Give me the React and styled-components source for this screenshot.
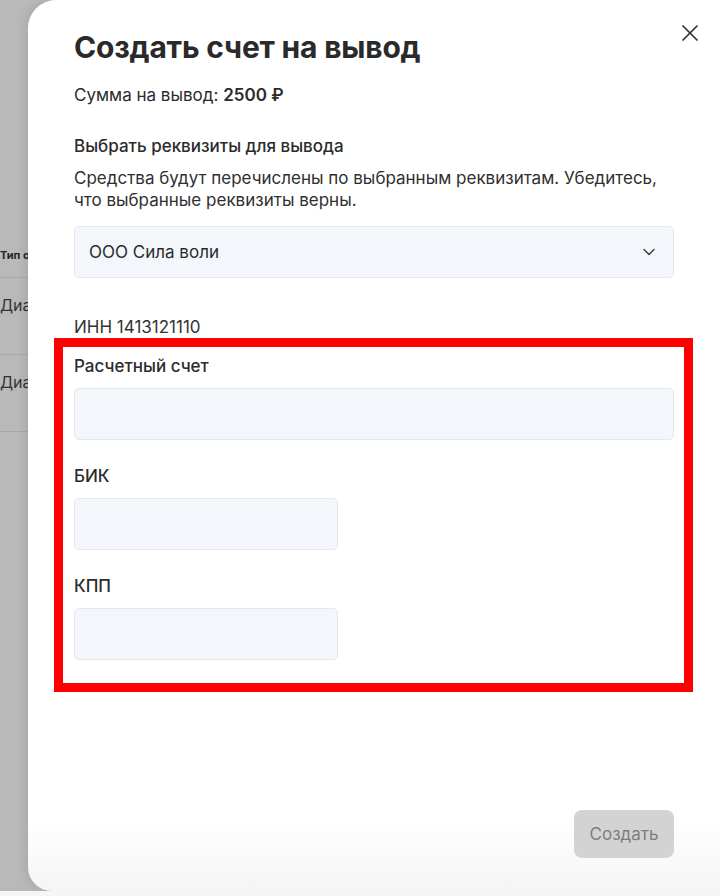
import React from "react";
import styled, { createGlobalStyle } from "styled-components";
import { X, ChevronDown } from "lucide-react";

const GlobalStyle = createGlobalStyle`
  html, body {
    margin: 0;
    padding: 0;
    background: #f6f6f6;
    overflow: hidden;
  }
  body {
    font-family: Inter, "Noto Sans", "Liberation Sans", sans-serif;
    color: #2b2b2b;
  }
  * { box-sizing: border-box; }
`;

const Page = styled.div`
  display: flex;
  height: 891px;
  background: #b9b9b9;
`;

const Backdrop = styled.div`
  width: 28px;
  flex-shrink: 0;
  overflow: hidden;
  padding-top: 233px;
  white-space: nowrap;
`;

const BackdropHead = styled.div`
  height: 45px;
  display: flex;
  align-items: center;
  font-size: 11px;
  font-weight: 700;
  color: #262626;
  border-bottom: 1px solid #a9a9a9;
`;

const BackdropRow = styled.div`
  height: 77px;
  padding-top: 16px;
  font-size: 16px;
  line-height: 22px;
  color: #333;
  border-bottom: 1px solid #a9a9a9;
`;

const Modal = styled.div`
  position: relative;
  flex: 1;
  display: flex;
  flex-direction: column;
  padding: 29px 46px 33px;
  background: linear-gradient(to bottom, #ffffff 92%, #f4f5f5 100%);
  border-radius: 28px 0 0 24px;
  box-shadow: -4px 0 10px rgba(0, 0, 0, 0.08);
`;

const CloseButton = styled.button`
  position: absolute;
  top: 19px;
  right: 16px;
  padding: 0;
  border: none;
  background: none;
  color: #333;
  display: flex;
  cursor: pointer;
`;

const Title = styled.h1`
  margin: 0;
  font-size: 30px;
  line-height: 36px;
  font-weight: 700;
  color: #2a2a2a;
  letter-spacing: -0.2px;
`;

const Amount = styled.div`
  margin-top: 18px;
  font-size: 17px;
  line-height: 24px;
  b { font-weight: 600; }
`;

const Label = styled.div`
  margin-top: ${(p) => p.$mt || 0}px;
  font-size: 17px;
  line-height: 22px;
  font-weight: 500;
  color: #2b2b2b;
`;

const Hint = styled.p`
  margin: 10px 0 0;
  font-size: 17px;
  line-height: 22px;
  color: #2f2f2f;
`;

const Select = styled.div`
  margin-top: 15px;
  height: 52px;
  padding: 0 14px;
  display: flex;
  align-items: center;
  justify-content: space-between;
  background: #f3f7fb;
  border: 1px solid #e4e8ed;
  border-radius: 5px;
  font-size: 17px;
  color: #2b2b2b;
`;

const Inn = styled.div`
  margin-top: 38px;
  font-size: 17px;
  line-height: 22px;
  color: #333;
`;

const Highlight = styled.div`
  margin: 0 -19px 0 -20px;
  padding: 8px 10px 23px 11px;
  border: 9px solid #ff0000;
  display: flex;
  flex-direction: column;
`;

const Field = styled.div`
  display: flex;
  flex-direction: column;
  gap: 11px;
  margin-top: ${(p) => (p.$first ? 0 : 25)}px;
`;

const Input = styled.input`
  height: 52px;
  width: ${(p) => p.$w || "100%"};
  padding: 0 14px;
  background: #f3f7fb;
  border: 1px solid #e4e8ed;
  border-radius: 5px;
  font-size: 17px;
  font-family: inherit;
  outline: none;
`;

const Footer = styled.div`
  margin-top: auto;
  display: flex;
  justify-content: flex-end;
`;

const SubmitButton = styled.button`
  width: 100px;
  height: 48px;
  border: none;
  border-radius: 8px;
  background: #d3d3d3;
  color: #7d7d7d;
  font-family: inherit;
  font-size: 17px;
  cursor: not-allowed;
`;

export default function App() {
  return (
    <>
      <GlobalStyle />
      <Page>
        <Backdrop>
          <BackdropHead>Тип операции</BackdropHead>
          <BackdropRow>Диагностика</BackdropRow>
          <BackdropRow>Диагностика</BackdropRow>
        </Backdrop>
        <Modal>
          <CloseButton aria-label="Закрыть">
            <X size={28} strokeWidth={1.5} />
          </CloseButton>
          <Title>Создать счет на вывод</Title>
          <Amount>
            Сумма на вывод: <b>2500 ₽</b>
          </Amount>
          <Label $mt={28}>Выбрать реквизиты для вывода</Label>
          <Hint>
            Средства будут перечислены по выбранным реквизитам. Убедитесь,
            что выбранные реквизиты верны.
          </Hint>
          <Select>
            <span>ООО Сила воли</span>
            <ChevronDown size={20} strokeWidth={1.5} color="#333" />
          </Select>
          <Inn>ИНН 1413121110</Inn>
          <Highlight>
            <Field $first>
              <Label>Расчетный счет</Label>
              <Input />
            </Field>
            <Field>
              <Label>БИК</Label>
              <Input $w="264px" />
            </Field>
            <Field>
              <Label>КПП</Label>
              <Input $w="264px" />
            </Field>
          </Highlight>
          <Footer>
            <SubmitButton disabled>Создать</SubmitButton>
          </Footer>
        </Modal>
      </Page>
    </>
  );
}
